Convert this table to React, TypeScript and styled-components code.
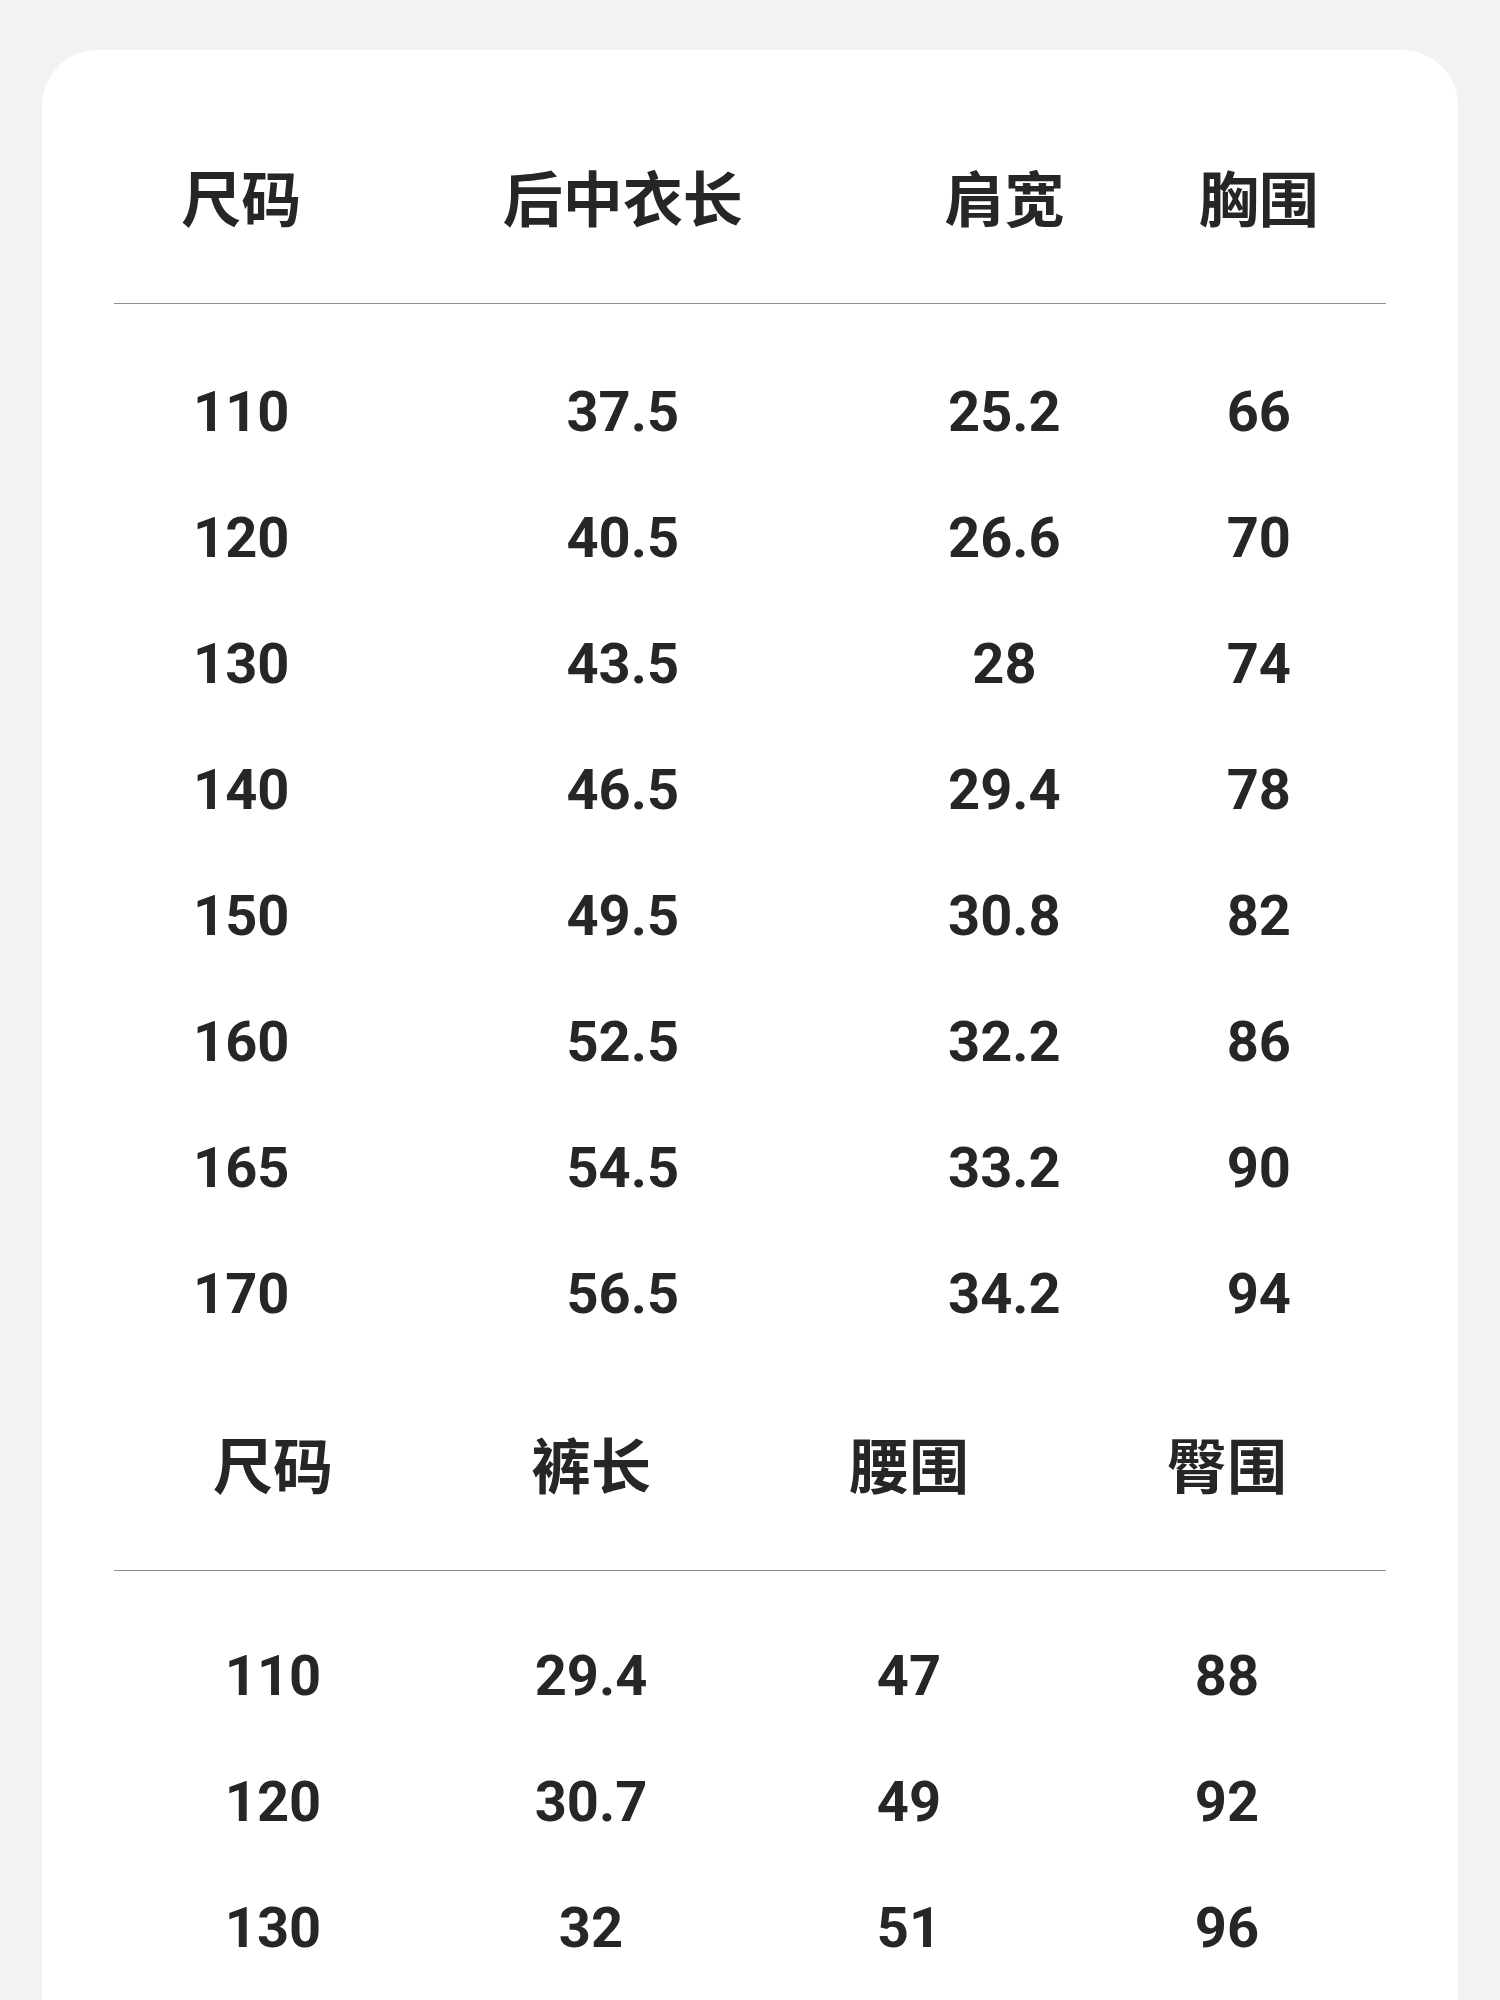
import React from "react"
import styled, { createGlobalStyle } from "styled-components"

// ******************** //
// DATA
// ******************** //

const TOP_HEAD = ["尺码", "后中衣长", "肩宽", "胸围"]
const TOP_ROWS = [
  ["110", "37.5", "25.2", "66"],
  ["120", "40.5", "26.6", "70"],
  ["130", "43.5", "28", "74"],
  ["140", "46.5", "29.4", "78"],
  ["150", "49.5", "30.8", "82"],
  ["160", "52.5", "32.2", "86"],
  ["165", "54.5", "33.2", "90"],
  ["170", "56.5", "34.2", "94"],
]

const PANTS_HEAD = ["尺码", "裤长", "腰围", "臀围"]
const PANTS_ROWS = [
  ["110", "29.4", "47", "88"],
  ["120", "30.7", "49", "92"],
  ["130", "32", "51", "96"],
]

const TEXT = "#262626"
const RULE = "#8c8c8c"

const GlobalStyle = createGlobalStyle`
  html, body {
    margin: 0;
    padding: 0;
    background: #f2f2f2;
  }
  #root {
    min-height: 2000px;
    overflow: hidden;
  }
`

const Page = styled.div`
  height: 2000px;
  padding: 50px 42px 0 42px;
  box-sizing: border-box;
  overflow: hidden;
`

const Card = styled.div`
  background: #ffffff;
  border-radius: 56px 56px 0 0;
  padding: 0 72px 200px 72px;
  min-height: 2100px;
  box-sizing: border-box;
`

const Table = styled.div<{ $cols: string; $top: number; $bodyTop: number }>`
  --cols: ${(p) => p.$cols};
  --body-top: ${(p) => p.$bodyTop}px;
  padding-top: ${(p) => p.$top}px;
`

const HeadRow = styled.div`
  display: grid;
  grid-template-columns: var(--cols);
  padding-bottom: 75px;
  border-bottom: 1.5px solid ${RULE};
`

const HeadCell = styled.div`
  text-align: center;
  font-family: "Noto Sans CJK SC", "Noto Sans", sans-serif;
  font-weight: 700;
  font-size: 60px;
  line-height: 64px;
  color: ${TEXT};
`

const Body = styled.div`
  padding-top: var(--body-top);
`

const Row = styled.div`
  display: grid;
  grid-template-columns: var(--cols);
  height: 126px;
  align-items: center;
`

const Cell = styled.div`
  text-align: center;
  font-family: Roboto, "Liberation Sans", sans-serif;
  font-weight: 700;
  font-size: 56px;
  line-height: 64px;
  color: ${TEXT};
`

const SizeTable = ({
  head,
  rows,
  cols,
  top,
  bodyTop,
}: {
  head: string[]
  rows: string[][]
  cols: string
  top: number
  bodyTop: number
}) => (
  <Table $cols={cols} $top={top} $bodyTop={bodyTop}>
    <HeadRow>
      {head.map((h) => (
        <HeadCell key={h}>{h}</HeadCell>
      ))}
    </HeadRow>
    <Body>
      {rows.map((r) => (
        <Row key={r[0]}>
          {r.map((v, i) => (
            <Cell key={i}>{v}</Cell>
          ))}
        </Row>
      ))}
    </Body>
  </Table>
)

export default function App() {
  return (
    <>
      <GlobalStyle />
      <Page>
        <Card>
          <SizeTable head={TOP_HEAD} rows={TOP_ROWS} cols="1fr 2fr 1fr 1fr" top={114} bodyTop={45} />
          <SizeTable head={PANTS_HEAD} rows={PANTS_ROWS} cols="repeat(4, 1fr)" top={74} bodyTop={42} />
        </Card>
      </Page>
    </>
  )
}
